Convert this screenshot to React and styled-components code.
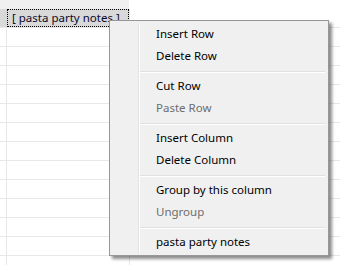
import React from 'react'
import styled, { createGlobalStyle } from 'styled-components'

const GlobalStyle = createGlobalStyle`
  html, body {
    margin: 0;
    padding: 0;
    background: #fff;
  }
  body {
    font-family: 'Noto Sans', 'Liberation Sans', sans-serif;
    font-size: 11.5px;
    color: #000;
  }
`

const menuItems = [
  { label: 'Insert Row' },
  { label: 'Delete Row' },
  { sep: true },
  { label: 'Cut Row' },
  { label: 'Paste Row', disabled: true },
  { sep: true },
  { label: 'Insert Column' },
  { label: 'Delete Column' },
  { sep: true },
  { label: 'Group by this column' },
  { label: 'Ungroup', disabled: true },
  { sep: true },
  { label: 'pasta party notes' },
]

function App() {
  const rows = Array.from({ length: 13 })

  return (
    <>
      <GlobalStyle />
      <Page>
        <Sheet>
          <TopStrip>
            <StripCell />
          </TopStrip>
          <HeaderRow>
            <HeaderCell>
              <FocusBox>[ pasta party notes ]</FocusBox>
            </HeaderCell>
          </HeaderRow>
          {rows.map((_, i) => (
            <Row key={i}>
              <Cell />
              <Cell />
              <Cell last />
            </Row>
          ))}
        </Sheet>

        <Menu>
          <Gutter />
          <Items>
            {menuItems.map((item, i) =>
              item.sep ? (
                <Separator key={i} />
              ) : (
                <Item key={i} disabled={item.disabled}>
                  {item.label}
                </Item>
              )
            )}
          </Items>
        </Menu>
      </Page>
    </>
  )
}

export default App

const Page = styled.div`
  position: relative;
  width: 340px;
  height: 265px;
  overflow: hidden;
  background: #fff;
`

const Sheet = styled.div`
  display: flex;
  flex-direction: column;
`

const TopStrip = styled.div`
  display: flex;
  height: 9px;
`

const StripCell = styled.div`
  width: 129px;
  background: #f0f0f0;
`

const HeaderRow = styled.div`
  display: flex;
  height: 19px;
  box-sizing: border-box;
  border-bottom: 1px solid #e8e8e8;
`

const HeaderCell = styled.div`
  width: 130px;
  box-sizing: border-box;
  padding-left: 7px;
  background: #d9d9d9;
  border-right: 1px solid #e8e8e8;
`

const FocusBox = styled.div`
  height: 18px;
  box-sizing: border-box;
  border: 1px dotted #000;
  padding-left: 4px;
  line-height: 15px;
  color: #0a0a2a;
  white-space: nowrap;
`

const Row = styled.div`
  display: grid;
  grid-template-columns: 7px 123px 1fr;
  height: 19px;
  box-sizing: border-box;
  border-bottom: 1px solid #e8e8e8;
`

const Cell = styled.div`
  box-sizing: border-box;
  border-right: ${(p) => (p.last ? 'none' : '1px solid #e8e8e8')};
`

const Menu = styled.div`
  position: absolute;
  left: 109px;
  top: 20px;
  width: 220px;
  box-sizing: border-box;
  display: flex;
  padding: 2px;
  background: #f0f0f0;
  border: 1px solid #979797;
  box-shadow: 3px 3px 3px rgba(0, 0, 0, 0.45);
`

const Gutter = styled.div`
  width: 26px;
  border-right: 1px solid #e2e3e3;
  box-shadow: 1px 0 0 #fff;
`

const Items = styled.div`
  flex: 1;
  display: flex;
  flex-direction: column;
  margin-left: 1px;
`

const Item = styled.div`
  height: 22px;
  line-height: 22px;
  padding-left: 16px;
  white-space: nowrap;
  color: ${(p) => (p.disabled ? '#6d6d6d' : '#000')};
`

const Separator = styled.div`
  height: 0;
  margin: 4px 1px 2px 0;
  border-top: 1px solid #e0e0e0;
  border-bottom: 1px solid #fff;
`
